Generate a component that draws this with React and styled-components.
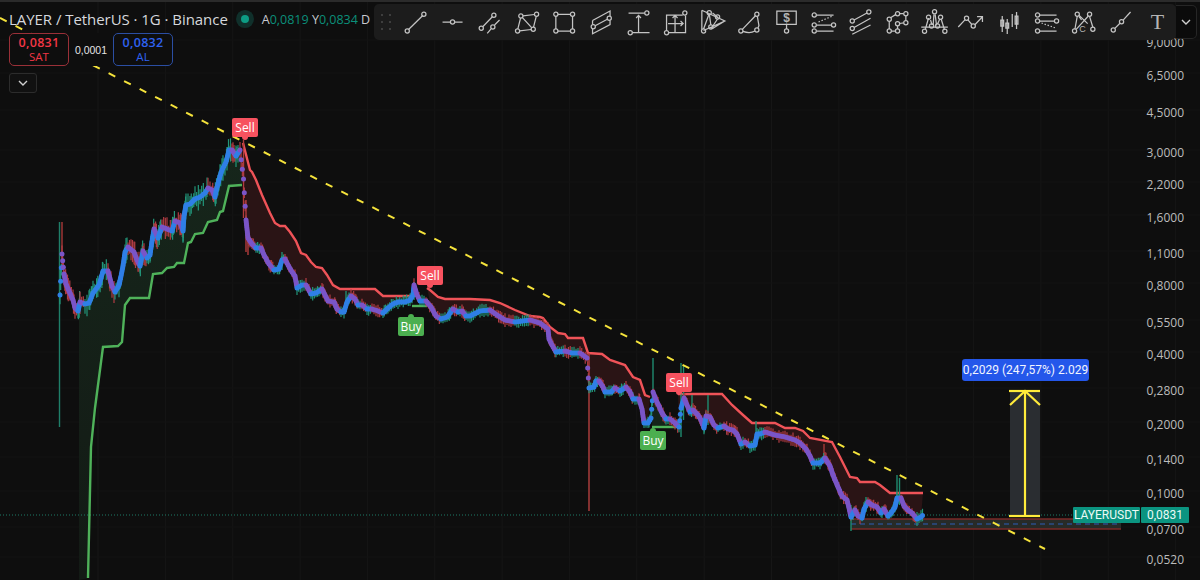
import styled, { createGlobalStyle } from 'styled-components';

const GlobalStyle = createGlobalStyle`
  html, body { margin: 0; padding: 0; background: #0e0e0e; }
  body { font-family: "Open Sans", "Noto Sans", sans-serif; }
`

// ---------- layout ----------
const Screen = styled.div`
  position: relative;
  width: 1200px;
  height: 580px;
  overflow: hidden;
  background: #0e0e0e;
  border-top: 2px solid #2b2b2b;
  box-sizing: border-box;
`
const Chart = styled.svg`
  position: absolute;
  left: 0;
  top: -2px;
`
const Legend = styled.div`
  position: absolute;
  left: 9px;
  top: 7px;
  display: flex;
  flex-direction: column;
  align-items: flex-start;
`
const TitleRow = styled.div`
  display: flex;
  align-items: center;
  height: 20px;
`
const Title = styled.span`
  font-size: 15px;
  letter-spacing: -0.05px;
  color: #d6d8dd;
  white-space: nowrap;
`
const Status = styled.span`
  width: 8px;
  height: 8px;
  margin: 0 13px 0 13px;
  border-radius: 50%;
  background: #0d9c84;
  box-shadow: 0 0 0 5px #10302b;
`
const Ohlc = styled.span`
  font-size: 12.5px;
  color: #c9cbd0;
  margin-right: 6px;
  white-space: nowrap;
  b { font-weight: 400; color: #0b8f7a; }
`
const TradeRow = styled.div`
  display: flex;
  align-items: center;
  margin-top: 4px;
  background: #0e0e0e;
`
const TradeBox = styled.div`
  width: 60px;
  height: 33px;
  box-sizing: border-box;
  border: 1px solid ${props => props.$tone == 'red' ? '#9a3038' : '#2b4ea3'};
  border-radius: 5px;
  color: ${props => props.$tone == 'red' ? '#f23645' : '#2e62f0'};
  display: flex;
  flex-direction: column;
  align-items: center;
  justify-content: center;
  line-height: 14px;
  font-size: 11.5px;
  strong { font-size: 12.5px; font-weight: 600; letter-spacing: 0.3px; }
`
const Spread = styled.span`
  width: 44px;
  text-align: center;
  font-size: 10.5px;
  color: #e4e4e4;
  font-family: "Liberation Sans", sans-serif;
`
const Collapse = styled.div`
  width: 28px;
  height: 20px;
  margin-top: 7px;
  box-sizing: border-box;
  border: 1px solid #2c2c2c;
  border-radius: 3px;
  background: #111;
  display: flex;
  align-items: center;
  justify-content: center;
`
const Toolbar = styled.div`
  position: absolute;
  left: 374px;
  top: 2px;
  width: 802px;
  height: 36px;
  background: #1c1c1c;
  border-radius: 5px;
  display: flex;
  align-items: center;
  box-sizing: border-box;
  padding-left: 5px;
`
const Grip = styled.div`
  width: 14px;
  margin-right: 5px;
  display: grid;
  grid-template-columns: 2px 2px;
  column-gap: 6px;
  row-gap: 5px;
  justify-content: center;
  i { width: 2px; height: 2px; border-radius: 50%; background: #4a4a4a; }
`
const Tool = styled.svg`
  flex: 0 0 auto;
  width: 37.1px;
  height: 28px;
  fill: none;
  stroke: #c4c4c4;
  stroke-width: 1.25;
  text { fill: #b4b4b4; stroke: none; }
`
const MoreTools = styled.div`
  position: absolute;
  left: 1176px;
  top: 3px;
  width: 21px;
  height: 34px;
  background: #0b0b0b;
  border: 1px solid #262626;
  border-left: none;
  border-radius: 0 5px 5px 0;
  box-sizing: border-box;
  display: flex;
  align-items: center;
  justify-content: center;
`
const AxisLabel = styled.span`
  position: absolute;
  right: 16px;
  font-size: 12px;
  line-height: 16px;
  color: #bcbcbc;
  transform: translateY(-10px);
`
const Signal = styled.div`
  position: absolute;
  width: 26px;
  height: 19px;
  border-radius: 2px;
  background: ${props => props.$kind == 'Sell' ? '#f7525f' : '#4caf50'};
  color: #fff;
  font-size: 12px;
  line-height: 19px;
  text-align: center;
  &::after {
    content: "";
    position: absolute;
    left: 10px;
    width: 6px;
    height: 6px;
    border-radius: 50%;
    background: inherit;
    ${props => props.$kind == 'Sell' ? 'bottom: -3px;' : 'top: -3px;'}
  }
`
const MeasureTag = styled.div`
  position: absolute;
  left: 962px;
  top: 357px;
  width: 127px;
  height: 22px;
  border-radius: 3px;
  background: #2457ea;
  color: #f2f5ff;
  font-family: Roboto, sans-serif;
  font-size: 12px;
  line-height: 22px;
  text-align: center;
  white-space: nowrap;
`
const PriceTags = styled.div`
  position: absolute;
  left: 1073px;
  top: 505px;
  display: flex;
  gap: 1px;
  height: 16px;
`
const PriceTag = styled.span`
  width: ${props => props.$w}px;
  background: #0b9480;
  color: #eafaf6;
  font-family: Roboto, sans-serif;
  font-size: 12px;
  line-height: 16px;
  text-align: center;
  border-radius: 1px;
`

// ---------- data ----------
const price = [
  [60,295],[62,254],[64,274],[66,284],[69,291],[73,300],[75,308],[78,311],[80,302],[85,304],[89,303],[93,293],[99,285],[103,271],[108,271],[112,286],[115,292],[119,285],[121,276],[123,266],[125,252],[128,247],[134,252],[137,260],[140,266],[143,251],[147,258],[150,255],[152,241],[154,229],[158,238],[162,227],[167,229],[172,231],[175,221],[180,223],[183,231],[184,216],[186,205],[190,204],[195,199],[200,197],[205,193],[208,188],[212,190],[215,197],[216,191],[220,176],[222,170],[226,162],[229,150],[232,150],[236,156],[240,150],[243.5,179],[246,220],[248,238],[252,244],[256,248],[261,248],[264,255],[269,264],[274,270],[279,269],[282,260],[285,259],[288,265],[292,272],[295,276],[297,288],[302,285],[306,285],[311,294],[316,293],[322,289],[325,295],[328,301],[334,302],[337,309],[341,312],[344,312],[347,302],[351,296],[355,299],[358,305],[362,305],[367,309],[372,309],[378,311],[383,313],[388,308],[393,304],[398,302],[405,302],[410,300],[413,295],[414,285],[417,295],[420,301],[426,301],[431,307],[436,316],[441,319],[447,317],[453,309],[458,312],[462,311],[466,316],[470,316],[480,311],[490,310],[497,315],[505,320],[515,322],[530,320],[540,323],[548,329],[549,339],[552,345],[556,352],[565,351],[572,353],[580,353],[587,358],[589,388],[594,387],[596,381],[599,381],[603,387],[605,392],[611,392],[615,388],[620,391],[626,387],[630,392],[633,399],[639,399],[642,409],[644,423],[648,423],[651,418],[653,392],[656,400],[658,404],[662,413],[666,419],[670,419],[675,423],[679,427],[681,408],[684,398],[687,405],[690,412],[693,410],[698,415],[701,420],[704,428],[706,416],[710,417],[714,425],[718,428],[724,426],[728,429],[733,430],[737,434],[741,444],[745,442],[750,446],[755,445],[757,434],[760,434],[765,432],[775,435],[785,437],[795,440],[800,443],[806,449],[810,456],[813,463],[820,463],[825,458],[830,466],[833,475],[838,487],[842,496],[847,500],[849,508],[851,517],[855,510],[858,516],[862,518],[864,509],[868,502],[872,505],[877,507],[881,513],[884,509],[888,516],[891,513],[895,507],[897,498],[901,498],[904,506],[908,510],[912,513],[917,519],[921,517],[924,514],
]
const greenStop = [[88,578],[91,447],[95,408],[103,347],[118,346],[122,342],[125,305],[130,298],[149,298],[153,274],[162,273],[167,268],[174,267],[177,263],[184,263],[188,243],[191,242],[195,234],[203,233],[208,222],[217,220],[220,212],[223,211],[229,186],[242,185]]
const redStop1 = [[243,143],[250,170],[252,172],[256,180],[262,195],[270,213],[275,223],[280,226],[285,226],[290,232],[296,241],[301,253],[306,255],[311,262],[316,267],[322,268],[327,275],[333,285],[340,289],[375,289],[383,296],[412,296]]
const redStop2 = [[427,288],[430,290],[438,297],[445,299],[470,299],[490,300],[500,303],[515,310],[530,316],[540,317],[543,318],[550,327],[558,333],[565,334],[568,338],[583,338],[588,353],[602,354],[610,360],[625,365],[633,377],[640,380],[645,395],[650,397]]
const redStop3 = [[678,394],[722,394],[732,405],[743,415],[752,423],[775,423],[785,428],[795,428],[803,431],[810,438],[832,442],[840,457],[850,477],[857,478],[860,482],[875,482],[880,485],[890,493],[923,493]]

// wicks that stand out from the rest [x, top, bottom, colour]
const longWicks = [
  [59.5,222,427,'#1f7f69'],[62,222,270,'#a83838'],[243.5,140,218,'#b23c3c'],[246,200,252,'#b23c3c'],[248,225,255,'#b23c3c'],
  [589,353,511,'#b5403f'],[653,358,400,'#1f8b70'],[681,363,437,'#1f8b70'],[683.5,365,420,'#1f8b70'],[692,395,415,'#1f8b70'],[708,395,425,'#1f8b70'],
  [756,421,445,'#1f8b70'],[897,475,505,'#1f8b70'],[899.5,478,505,'#1f8b70'],[851,505,531,'#1f8b70'],[346,291,312,'#1f8b70'],[282,252,270,'#1f8b70'],[414,282,300,'#1f8b70'],[866,497,512,'#1f8b70'],[824,444,462,'#a83838'],
]
const axis = [[43,'9,0000'],[76,'6,5000'],[113,'4,5000'],[153,'3,0000'],[185,'2,2000'],[218,'1,6000'],[254,'1,1000'],[286,'0,8000'],[323,'0,5500'],[355,'0,4000'],[391,'0,2800'],[425,'0,2000'],[460,'0,1400'],[494,'0,1000'],[530,'0,0700'],[560,'0,0520']]
const signals = [
  ['Sell',232,116],['Sell',417,264],['Buy',398,315],['Sell',666,371],['Buy',640,429],
]

function line(pts){ return pts.map(p=>p.join(',')).join(' ') }

function between(a,b){
  return price.filter(p=>p[0]>=a && p[0]<=b).reverse()
}

function samples(){
  let out = []
  for(let i=0;i<price.length-1;i++){
    let [x0,y0] = price[i]
    let [x1,y1] = price[i+1]
    let n = Math.max(1,Math.round(Math.hypot(x1-x0,y1-y0)/2))
    // the long drops have only a few bars, they are not a solid column
    if(Math.abs(y1-y0)>18) n = 3
    for(let k=0;k<n;k++){
      let t = k/n
      out.push({x:x0+(x1-x0)*t, y:y0+(y1-y0)*t, down:y1>y0})
    }
  }
  return out
}

function noise(i){
  let s = Math.sin(i*12.9898)*43758.5453
  return s-Math.floor(s)
}

function Bars(){
  let data = samples()
  return (
    <g>
      {data.map((d,i)=>{
        let big = d.x<243 ? 10 : 4
        let up = 3+noise(i)*big
        let dn = 3+noise(i+500)*big
        return <line key={i} x1={d.x} x2={d.x} y1={d.y-up} y2={d.y+dn} stroke={d.down?'#b23c44':'#22967a'} strokeWidth="1.2"/>
      })}
      {data.map((d,i)=>(
        <circle key={i} cx={d.x} cy={d.y} r="2.5" fill={d.down?'#7a55c8':'#2f7fe6'}/>
      ))}
    </g>
  )
}

function PriceChart(){
  let vlines = []
  for(let x=98;x<1190;x+=67.35) vlines.push(x)
  return (
    <Chart width="1200" height="580" viewBox="0 0 1200 580">
      <defs>
        <linearGradient id="greenFade" x1="0" x2="0" y1="0" y2="1">
          <stop offset="0" stopColor="#16261b"/>
          <stop offset="1" stopColor="#131a15"/>
        </linearGradient>
      </defs>
      {vlines.map(x=><line key={x} x1={x} x2={x} y1="0" y2="580" stroke="#161616"/>)}
      {axis.map(a=><line key={a[0]} x1="0" x2="1200" y1={a[0]-3} y2={a[0]-3} stroke="#131313"/>)}

      <polygon points={line([[79,580],...greenStop,...between(79,242),[79,311]])} fill="url(#greenFade)"/>
      <polygon points={line([...redStop1,...between(243,412)])} fill="#2a1415"/>
      <polygon points={line([...redStop2,...between(427,650)])} fill="#2a1415"/>
      <polygon points={line([...redStop3,...between(678,923)])} fill="#2a1415"/>
      <polygon points={line([[652,427],[678,427],...between(652,678)])} fill="#15241a"/>

      <line x1="0" x2="1075" y1="515" y2="515" stroke="#1c7a66" strokeDasharray="1 2"/>

      <rect x="851" y="519" width="270" height="10" fill="#272b28"/>
      <line x1="851" x2="1121" y1="519" y2="519" stroke="#7c2b29" strokeWidth="1.6"/>
      <line x1="851" x2="1121" y1="529" y2="529" stroke="#7c2b29" strokeWidth="1.6"/>
      <line x1="851" x2="1121" y1="524" y2="524" stroke="#2d5fb8" strokeWidth="1" strokeDasharray="5 4"/>

      <polyline points={line(greenStop)} fill="none" stroke="#4fb25a" strokeWidth="2.4"/>
      <polyline points={line(redStop1)} fill="none" stroke="#ef5358" strokeWidth="2.4"/>
      <polyline points={line(redStop2)} fill="none" stroke="#ef5358" strokeWidth="2.4"/>
      <polyline points={line(redStop3)} fill="none" stroke="#ef5358" strokeWidth="2.4"/>
      <polyline points="412,306 427,306" fill="none" stroke="#4fb25a" strokeWidth="2.4"/>
      <polyline points="652,427 678,427" fill="none" stroke="#4fb25a" strokeWidth="2.4"/>

      {longWicks.map((w,i)=><line key={i} x1={w[0]} x2={w[0]} y1={w[1]} y2={w[2]} stroke={w[3]} strokeWidth="1.4"/>)}
      <Bars/>

      <line x1="0" y1="18" x2="1045" y2="549" stroke="#f5e33b" strokeWidth="2" strokeDasharray="7.5 9.9"/>

      <rect x="1010" y="391" width="30" height="126" fill="#2a2d31"/>
      <g stroke="#ffeb3b" strokeWidth="2.2" fill="none">
        <line x1="1025" x2="1025" y1="391" y2="516"/>
        <line x1="1009" x2="1040" y1="516" y2="516"/>
        <line x1="1009" x2="1040" y1="391" y2="391"/>
        <polyline points="1010,405 1025,391 1040,405"/>
      </g>
    </Chart>
  )
}

// ---------- toolbar icons ----------
function N({x,y}){ return <circle cx={x} cy={y} r="2.1"/> }

const icons = [
  <><path d="M7 21.5 21 7.7"/><N x={5.7} y={23}/><N x={22.3} y={6.3}/></>,
  <><path d="M4 14h7.8M16.2 14H24"/><N x={14} y={14}/></>,
  <><path d="M7.2 18.8 16.8 8.8M11.7 25.3l3.8-4.4M19 17l5-5"/><N x={5.7} y={20.3}/><N x={18.3} y={7.3}/><N x={17.3} y={19}/></>,
  <><path d="M10.4 7.8 21.9 6.5M23.7 8.4 21 19.2M18.6 21.5 7.1 22.8M5.3 20.9 8 10.1M9.9 9.7l9.2 10"/><N x={8.3} y={8}/><N x={24} y={6.3}/><N x={5} y={23}/><N x={20.7} y={21.3}/></>,
  <><path d="M8.4 6.3h12.5M8.4 23h12.5M6.3 8.4v12.5M23 8.4v12.5"/><N x={6.3} y={6.3}/><N x={23} y={6.3}/><N x={6.3} y={23}/><N x={23} y={23}/></>,
  <><path d="M5 12.5 22.5 3v5.2M22.5 12.5v4L5 25.7v-5M5 16.5v-4M7.6 17.7l12.2-6.4"/><N x={5.7} y={18.7}/><N x={21.7} y={10.3}/></>,
  <><path d="M4 5h16.2M8 24.7h17M14 24.7V7.5M11.6 10 14 7.4l2.4 2.6"/><N x={22.3} y={5}/><N x={5.7} y={24.7}/></>,
  <><path d="M5 22.6V7h16.2M7.1 24.7H24V7.4M6.5 15.5h15M19 13l2.6 2.5L19 18M13.5 24V7.5M11 10l2.5-2.6L16 10"/><N x={23.3} y={5}/><N x={5} y={24.7}/></>,
  <><path d="M3.3 2.3V21M3.3 2.3 26.3 13 5 22.5M10.7 5.5 5 21M10.7 5.5 12.3 17M12.3 21 19 11M14 20.5 26.3 13M19 9 14 5"/><N x={5} y={23}/><N x={10.7} y={4.7}/><N x={12.3} y={19}/><N x={19} y={9}/></>,
  <><path d="M6.8 21.4 19.9 7.8M21.8 8.3 23.4 17.6 22.4 20M7.4 23.4C12 25 16 25 19.4 23"/><N x={5.3} y={23}/><N x={21.3} y={6.3}/><N x={21.3} y={22}/></>,
  <><path d="M4.3 3h19.4v13.3H4.3zM14 16.3v4.6"/><N x={14} y={23}/><text x="14" y="14" textAnchor="middle" fontSize="12" fontWeight="700" fontFamily="Liberation Sans">$</text></>,
  <><path d="M7 7h17M7.3 17h14.5M7.3 23H24"/><path d="M9 14l14-6" strokeDasharray="1.4 1.8"/><N x={4.7} y={7}/><N x={4.7} y={17}/><N x={24} y={17}/><N x={4.7} y={23}/></>,
  <><path d="M7.5 12 20.4 5M7.5 19.5 24 10.3M5.7 26.3 24 17"/><N x={5.7} y={13}/><N x={22.3} y={4}/><N x={5.7} y={20.5}/></>,
  <><path d="M7 9.8 12.4 6.4M16.1 5.7h4.1M22.3 7.8v4.8M20.2 14.9 16 15.5M14 17.8v3.1M11.9 23H7.8M5.7 20.9v-7.5"/><N x={5.7} y={11.3}/><N x={14} y={5.7}/><N x={22.3} y={5.7}/><N x={22.3} y={14.7}/><N x={14} y={15.7}/><N x={14} y={23}/><N x={5.7} y={23}/></>,
  <><path d="M.7 19h26.6M4.6 22 8 10M10 12l1.5 5M12.6 17 13.4 6.4M14.6 6.4l1.4 11M17 16l2.2-5M20.6 11l3.4 11"/><N x={4} y={23.3}/><N x={8} y={9.3}/><N x={14} y={3.7}/><N x={20} y={9.3}/><N x={24.3} y={23.3}/><N x={11} y={18}/><N x={17} y={18}/></>,
  <><path d="M.7 19 7.6 11.6M10.4 11.8 14.3 16.5M17.3 16.7 24.7 9M19.5 8.5h5.4v5.4"/><N x={9} y={10.3}/><N x={15.7} y={18}/></>,
  <><path d="M6.7 8v16M11.7 11v15M16.7 6v13M21 4v17M5.3 12h2.8v6H5.3zM10.3 15h2.8v5h-2.8zM19.6 8h2.8v8h-2.8z"/></>,
  <><path d="M7 7h17M7.3 13h14.5M7.3 23H24"/><path d="M9 15l14 5" strokeDasharray="1.4 1.8"/><N x={5} y={7}/><N x={5} y={13}/><N x={24} y={13}/><N x={5} y={23}/></>,
  <><path d="M5.4 21 7.7 8.4M9.6 7.4l8.5 8.2M20 8.4 23.3 19.3M18.8 8 6.6 21.4M9.5 8.6 12 12"/><N x={5} y={23}/><N x={7.7} y={6.3}/><N x={20} y={6.3}/><N x={23.3} y={21.3}/><text x="13" y="24" textAnchor="middle" fontSize="9" fontFamily="Liberation Sans">C</text></>,
  <><path d="M8.3 20.4 13.4 15.3M16.6 12.1 24 4"/><N x={6.7} y={22}/><N x={15} y={13.7}/></>,
  <><text x="14" y="21" textAnchor="middle" fontSize="22" fontFamily="Liberation Serif">T</text></>,
]

function Chevron({color}){
  return (
    <svg width="10" height="6" viewBox="0 0 10 6" fill="none" stroke={color} strokeWidth="1.4">
      <path d="M1 1l4 4 4-4"/>
    </svg>
  )
}

export default function App(){
  return (
    <Screen>
      <GlobalStyle/>
      <PriceChart/>

      {axis.map(a=><AxisLabel key={a[0]} style={{top:a[0]}}>{a[1]}</AxisLabel>)}

      {signals.map((s,i)=><Signal key={i} $kind={s[0]} style={{left:s[1],top:s[2]}}>{s[0]}</Signal>)}

      <MeasureTag>0,2029 (247,57%) 2.029</MeasureTag>
      <PriceTags>
        <PriceTag $w={67}>LAYERUSDT</PriceTag>
        <PriceTag $w={48}>0,0831</PriceTag>
      </PriceTags>

      <Legend>
        <TitleRow>
          <Title>LAYER / TetherUS · 1G · Binance</Title>
          <Status/>
          <Ohlc>A<b>0,0819</b> Y<b>0,0834</b> D</Ohlc>
        </TitleRow>
        <TradeRow>
          <TradeBox $tone="red"><strong>0,0831</strong>SAT</TradeBox>
          <Spread>0,0001</Spread>
          <TradeBox $tone="blue"><strong>0,0832</strong>AL</TradeBox>
        </TradeRow>
        <Collapse><Chevron color="#d0d0d0"/></Collapse>
      </Legend>

      <Toolbar>
        <Grip>{[0,1,2,3,4,5].map(i=><i key={i}/>)}</Grip>
        {icons.map((ic,i)=><Tool key={i} viewBox="0 0 28 28">{ic}</Tool>)}
      </Toolbar>
      <MoreTools><Chevron color="#d0d0d0"/></MoreTools>
    </Screen>
  )
}
